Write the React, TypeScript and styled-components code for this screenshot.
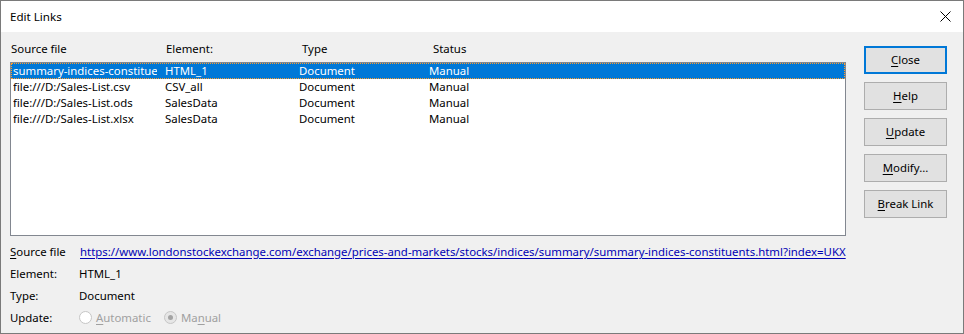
import React from 'react';
import styled, { createGlobalStyle } from 'styled-components';

const GlobalStyle = createGlobalStyle`
  html, body {
    margin: 0;
    padding: 0;
    background: #ffffff;
  }
  body {
    font-family: 'Noto Sans', 'Liberation Sans', sans-serif;
    font-size: 11.4px;
    color: #000;
  }
`;

type LinkRow = {
  file: string;
  element: string;
  type: string;
  status: string;
};

const rows: LinkRow[] = [
  { file: 'summary-indices-constituents.html', element: 'HTML_1', type: 'Document', status: 'Manual' },
  { file: 'file:///D:/Sales-List.csv', element: 'CSV_all', type: 'Document', status: 'Manual' },
  { file: 'file:///D:/Sales-List.ods', element: 'SalesData', type: 'Document', status: 'Manual' },
  { file: 'file:///D:/Sales-List.xlsx', element: 'SalesData', type: 'Document', status: 'Manual' },
];

const COLS = '152px 134px 130px 1fr';

const Window = styled.div`
  width: 964px;
  height: 334px;
  box-sizing: border-box;
  border: 1px solid #7a7a7a;
  background: #f0f0f0;
  display: flex;
  flex-direction: column;
`;

const TitleBar = styled.div`
  height: 31px;
  background: #ffffff;
  display: flex;
  align-items: center;
  justify-content: space-between;
  padding: 0 12px 0 9px;
  flex-shrink: 0;
`;

const Title = styled.span`
  font-size: 11.6px;
  padding-bottom: 1px;
`;

const Body = styled.div`
  flex: 1;
  display: flex;
  padding: 0 16px 0 9px;
  min-width: 0;
`;

const Main = styled.div`
  flex: 1;
  min-width: 0;
  display: flex;
  flex-direction: column;
`;

const HeaderRow = styled.div`
  display: grid;
  grid-template-columns: 156px 136px 131px 1fr;
  height: 30px;
  align-items: center;
  padding-top: 2px;
  box-sizing: border-box;
`;

const HeaderCell = styled.span<{ $shift?: number }>`
  padding-left: ${(p) => p.$shift ?? 0}px;
`;

const ListBox = styled.div`
  height: 174px;
  box-sizing: border-box;
  border: 1px solid #828790;
  background: #ffffff;
`;

const Row = styled.div<{ $selected?: boolean }>`
  display: grid;
  grid-template-columns: ${COLS};
  height: 16px;
  line-height: 16px;
  padding-left: 2px;
  box-sizing: border-box;
  background: ${(p) => (p.$selected ? '#0078d7' : 'transparent')};
  color: ${(p) => (p.$selected ? '#ffffff' : '#000000')};
  outline: ${(p) => (p.$selected ? '1px dotted #ff9d2b' : 'none')};
  outline-offset: -1px;
`;

const Cell = styled.span`
  white-space: nowrap;
  overflow: hidden;
  text-overflow: clip;
  margin-right: 8px;
`;

const Details = styled.div`
  display: flex;
  flex-direction: column;
  margin-top: 4px;
`;

const DetailRow = styled.div`
  display: flex;
  align-items: center;
  height: 22px;
  white-space: nowrap;
`;

const Label = styled.span`
  width: 69px;
  flex-shrink: 0;
`;

const UrlLink = styled.a`
  color: #0000b4;
  text-decoration: underline;
  text-underline-offset: 2px;
  margin-left: 1px;
`;

const Mn = styled.span`
  text-decoration: underline;
  text-underline-offset: 2px;
`;

const RadioGroup = styled.div`
  display: flex;
  align-items: center;
  gap: 13px;
`;

const RadioOption = styled.label`
  display: flex;
  align-items: center;
  gap: 4px;
  color: #a0a0a0;
`;

const RadioCircle = styled.span<{ $checked?: boolean }>`
  width: 13px;
  height: 13px;
  box-sizing: border-box;
  border-radius: 50%;
  border: 1px solid #c6c6c6;
  background: ${(p) => (p.$checked ? '#e6e6e6' : '#ffffff')};
  display: flex;
  align-items: center;
  justify-content: center;
  &::after {
    content: '';
    display: ${(p) => (p.$checked ? 'block' : 'none')};
    width: 5px;
    height: 5px;
    border-radius: 50%;
    background: #a3a3a3;
  }
`;

const ButtonColumn = styled.div`
  width: 83px;
  flex-shrink: 0;
  margin-left: 18px;
  padding-top: 14px;
  display: flex;
  flex-direction: column;
  gap: 8px;
`;

const Button = styled.button<{ $default?: boolean }>`
  font: inherit;
  color: #000;
  height: 28px;
  box-sizing: border-box;
  background: #e1e1e1;
  border: ${(p) => (p.$default ? '2px solid #0078d7' : '1px solid #adadad')};
  padding: 0 0 1px;
  text-align: center;
  white-space: nowrap;
`;

const CloseIcon = () => (
  <svg width="11" height="11" viewBox="0 0 11 11">
    <path d="M0.5 0.5 L10.5 10.5 M10.5 0.5 L0.5 10.5" stroke="#000" strokeWidth="1" />
  </svg>
);

export default function App() {
  return (
    <>
      <GlobalStyle />
      <Window>
        <TitleBar>
          <Title>Edit Links</Title>
          <CloseIcon />
        </TitleBar>
        <Body>
          <Main>
            <HeaderRow>
              <HeaderCell $shift={1}>Source file</HeaderCell>
              <HeaderCell>Element:</HeaderCell>
              <HeaderCell>Type</HeaderCell>
              <HeaderCell>Status</HeaderCell>
            </HeaderRow>
            <ListBox>
              {rows.map((r, i) => (
                <Row key={i} $selected={i === 0}>
                  <Cell>{r.file}</Cell>
                  <Cell>{r.element}</Cell>
                  <Cell>{r.type}</Cell>
                  <Cell>{r.status}</Cell>
                </Row>
              ))}
            </ListBox>
            <Details>
              <DetailRow>
                <Label>
                  <Mn>S</Mn>ource file
                </Label>
                <UrlLink href="#">
                  https://www.londonstockexchange.com/exchange/prices-and-markets/stocks/indices/summary/summary-indices-constituents.html?index=UKX
                </UrlLink>
              </DetailRow>
              <DetailRow>
                <Label>Element:</Label>
                <span>HTML_1</span>
              </DetailRow>
              <DetailRow>
                <Label>Type:</Label>
                <span>Document</span>
              </DetailRow>
              <DetailRow>
                <Label>Update:</Label>
                <RadioGroup>
                  <RadioOption>
                    <RadioCircle />
                    <span>
                      <Mn>A</Mn>utomatic
                    </span>
                  </RadioOption>
                  <RadioOption>
                    <RadioCircle $checked />
                    <span>
                      Ma<Mn>n</Mn>ual
                    </span>
                  </RadioOption>
                </RadioGroup>
              </DetailRow>
            </Details>
          </Main>
          <ButtonColumn>
            <Button $default>
              <Mn>C</Mn>lose
            </Button>
            <Button>
              <Mn>H</Mn>elp
            </Button>
            <Button>
              <Mn>U</Mn>pdate
            </Button>
            <Button>
              <Mn>M</Mn>odify...
            </Button>
            <Button>
              <Mn>B</Mn>reak Link
            </Button>
          </ButtonColumn>
        </Body>
      </Window>
    </>
  );
}
